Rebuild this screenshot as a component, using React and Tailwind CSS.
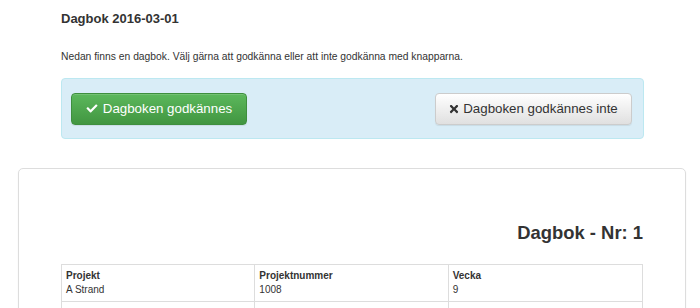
import React from "react";
import { FaCheck, FaTimes } from "react-icons/fa";

const font = { fontFamily: '"Liberation Sans", Arial, sans-serif' };

function Cell({ label, value, last }) {
  return (
    <div className={`px-[4px] pt-[4px] pb-[4px] text-[10px] leading-[14px] text-[#333] ${last ? "" : "border-r border-[#ddd]"}`}>
      <div className="font-bold">{label}</div>
      <div>{value}</div>
    </div>
  );
}

export default function App() {
  return (
    <div className="min-h-[308px] bg-white text-[#333]" style={font}>
      <div className="ml-[61px] w-[583px] pt-[11px]">
        <h1 className="text-[13px] font-bold leading-[16px]">Dagbok 2016-03-01</h1>
        <p className="mt-[23px] text-[10.3px] leading-[14px]">
          Nedan finns en dagbok. Välj gärna att godkänna eller att inte godkänna med knapparna.
        </p>
        <div className="mt-[14px] flex h-[61px] items-center justify-between rounded-[4px] border border-[#bce8f1] bg-[#d9edf7] pl-[9px] pr-[11px]">
          <button className="flex h-[32px] w-[176px] items-center justify-center gap-[5px] rounded-[4px] border border-[#3e8f3e] bg-gradient-to-b from-[#5cb85c] to-[#419641] text-[13.3px] text-white shadow-[inset_0_1px_0_rgba(255,255,255,0.15),0_1px_1px_rgba(0,0,0,0.075)]">
            <FaCheck className="h-[11px] w-[12px]" />
            <span>Dagboken godkännes</span>
          </button>
          <button className="flex h-[32px] w-[197px] items-center justify-center gap-[4px] rounded-[4px] border border-[#ccc] bg-gradient-to-b from-white to-[#e0e0e0] text-[13.3px] text-[#333] shadow-[inset_0_1px_0_rgba(255,255,255,0.15),0_1px_1px_rgba(0,0,0,0.075)]">
            <FaTimes className="h-[12px] w-[10px]" />
            <span>Dagboken godkännes inte</span>
          </button>
        </div>
      </div>
      <div className="ml-[18px] mt-[29px] w-[668px] rounded-[5px] border border-[#ddd] px-[42px] pt-[54px] pb-[20px] shadow-[0_1px_2px_rgba(0,0,0,0.05)]">
        <h2 className="text-right text-[18.4px] font-bold leading-[20px]">Dagbok - Nr: 1</h2>
        <div className="mt-[21px] border border-[#ddd]">
          <div className="grid grid-cols-3 border-b border-[#ddd]">
            <Cell label="Projekt" value="A Strand" />
            <Cell label="Projektnummer" value="1008" />
            <Cell label="Vecka" value="9" last />
          </div>
          <div className="grid grid-cols-3">
            <Cell label="Kund" value="Bygg AB" />
            <Cell label="Kontakt" value="Anders" />
            <Cell label="Veckodag" value="Tisdag" last />
          </div>
        </div>
      </div>
    </div>
  );
}
